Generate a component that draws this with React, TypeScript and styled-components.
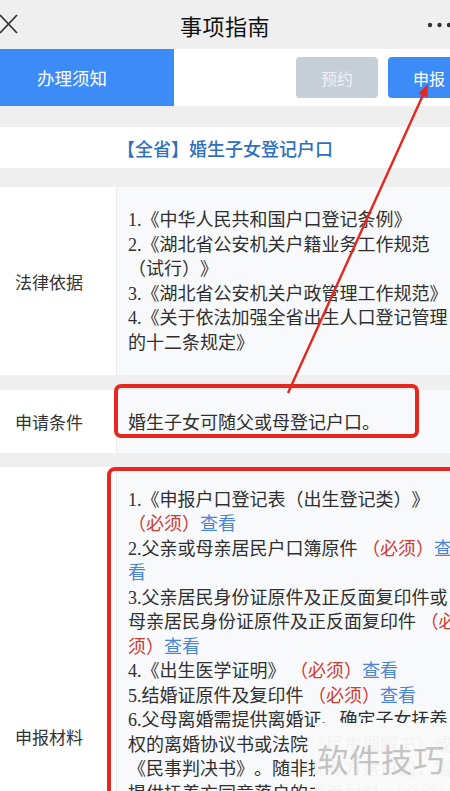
import styled, { createGlobalStyle } from "styled-components";

const GlobalStyle = createGlobalStyle`
  html, body {
    margin: 0;
    padding: 0;
    background: #efefef;
    overflow: hidden;
  }
  * {
    box-sizing: border-box;
  }
`;

const Frame = styled.div`
  position: relative;
  width: 450px;
  height: 791px;
  overflow: hidden;
  background: #efefef;
  font-family: "Noto Sans CJK SC", "Noto Sans", sans-serif;
  color: #333;
`;

const Header = styled.header`
  height: 49px;
  display: grid;
  grid-template-columns: 60px 1fr 60px;
  align-items: center;
  background: #efefef;
`;

const Title = styled.h1`
  margin: 0;
  text-align: center;
  font-size: 22px;
  font-weight: 400;
  color: #111;
  letter-spacing: 0.5px;
`;

const Close = styled.svg`
  margin-left: -1px;
  margin-top: -2px;
`;

const Dots = styled.svg`
  justify-self: end;
  margin-right: -4px;
`;

const TabBar = styled.nav`
  height: 57px;
  display: flex;
  align-items: center;
  background: #fff;
`;

const ActiveTab = styled.div`
  flex-shrink: 0;
  width: 174px;
  height: 100%;
  display: flex;
  align-items: center;
  padding-left: 37px;
  background: #3d8bf6;
  color: #fff;
  font-size: 17.5px;
`;

const Actions = styled.div`
  flex-shrink: 0;
  display: flex;
  gap: 10px;
  margin-left: 122px;
`;

const ActionButton = styled.button<{ $primary?: boolean }>`
  flex-shrink: 0;
  width: 82px;
  height: 41px;
  border: none;
  border-radius: 4px;
  background: ${(p) => (p.$primary ? "#3d8bf6" : "#c6ced8")};
  color: ${(p) => (p.$primary ? "#fff" : "#eef2f7")};
  font-family: inherit;
  font-size: 16px;
  padding: 0;
`;

const Body = styled.main`
  display: flex;
  flex-direction: column;
  padding-top: 21px;
`;

const ItemTitle = styled.div`
  height: 41px;
  display: flex;
  align-items: center;
  justify-content: center;
  background: #fff;
  color: #2f6fc0;
  font-size: 18px;
  font-weight: 500;
  margin-bottom: 19px;
`;

const Row = styled.section<{ $gap?: number }>`
  display: grid;
  grid-template-columns: 117px 347px;
  background: #fff;
  margin-bottom: ${(p) => p.$gap ?? 15}px;
`;

const Label = styled.div`
  display: flex;
  align-items: center;
  padding-left: 15px;
  font-size: 17px;
  color: #333;
  border-right: 1px solid #e8e9ec;
`;

const Content = styled.div<{ $pt?: number; $pb?: number }>`
  background: #f8f9fb;
  padding: ${(p) => p.$pt ?? 21}px 3px ${(p) => p.$pb ?? 20}px 11px;
  font-family: "Liberation Serif", "Noto Sans CJK SC", serif;
  font-size: 18px;
  line-height: 24.5px;
  color: #2f2f2f;
  text-spacing-trim: space-all;
`;

const Line = styled.div``;

const Required = styled.span`
  color: #d03a32;
`;

const Link = styled.span`
  color: #4a86d6;
`;

const Overlay = styled.svg`
  position: absolute;
  top: 0;
  left: 0;
  pointer-events: none;
`;

const Watermark = styled.div`
  position: absolute;
  left: 315px;
  top: 723px;
  width: 150px;
  height: 80px;
  padding: 12px 0 0 2px;
  background: rgba(250, 250, 250, 0.96);
  color: #c3c3c3;
  font-size: 31.5px;
  letter-spacing: 0.5px;
`;

const laws = [
  "1.《中华人民共和国户口登记条例》",
  "2.《湖北省公安机关户籍业务工作规范（试行）》",
  "3.《湖北省公安机关户政管理工作规范》",
  "4.《关于依法加强全省出生人口登记管理的十二条规定》",
];

const materials = [
  "1.《申报户口登记表（出生登记类）》",
  "2.父亲或母亲居民户口簿原件",
  "3.父亲居民身份证原件及正反面复印件或母亲居民身份证原件及正反面复印件",
  "4.《出生医学证明》",
  "5.结婚证原件及复印件",
  "6.父母离婚需提供离婚证、确定子女抚养权的离婚协议书或法院《民事调解书》或《民事判决书》。随非抚养方落户的，需提供抚养方同意落户的书面材料",
  "7.父母一方为现役军人的，需提供部队团级以上政治机关出具的身份证明",
  "8.委托他人代办的，需提供委托书及受托人居民身份证原件",
  "9.申请人居民身份证原件",
];

export default function App() {
  return (
    <>
      <GlobalStyle />
      <Frame>
        <Header>
          <Close width="20" height="20" viewBox="0 0 20 20">
            <path d="M1 1 L18 19 M18 1 L1 19" stroke="#333" strokeWidth="1.8" fill="none" />
          </Close>
          <Title>事项指南</Title>
          <Dots width="30" height="8" viewBox="0 0 30 8">
            <circle cx="6" cy="4" r="2.2" fill="#333" />
            <circle cx="15.5" cy="4" r="2.2" fill="#333" />
            <circle cx="25" cy="4" r="2.2" fill="#333" />
          </Dots>
        </Header>

        <TabBar>
          <ActiveTab>办理须知</ActiveTab>
          <Actions>
            <ActionButton>预约</ActionButton>
            <ActionButton $primary>申报</ActionButton>
          </Actions>
        </TabBar>

        <Body>
          <ItemTitle>【全省】婚生子女登记户口</ItemTitle>

          <Row>
            <Label>法律依据</Label>
            <Content>
              {laws.map((t) => (
                <Line key={t}>{t}</Line>
              ))}
            </Content>
          </Row>

          <Row $gap={14}>
            <Label>申请条件</Label>
            <Content $pt={21} $pb={17}>
              婚生子女可随父或母登记户口。
            </Content>
          </Row>

          <Row>
            <Label>申报材料</Label>
            <Content $pb={28}>
              {materials.map((t) => (
                <Line key={t}>
                  {t} <Required>（必须）</Required>
                  <Link>查看</Link>
                </Line>
              ))}
            </Content>
          </Row>
        </Body>

        <Overlay width="450" height="791" viewBox="0 0 450 791">
          <line x1="288" y1="393" x2="423" y2="95" stroke="#e5271f" strokeWidth="2.4" />
          <polygon points="428,84 427.5,97.5 418.5,93.5" fill="#e5271f" />
          <rect x="116" y="386" width="301" height="50" rx="5" fill="none" stroke="#e5271f" strokeWidth="4" />
          <rect x="109" y="469" width="400" height="400" rx="6" fill="none" stroke="#e5271f" strokeWidth="4" />
        </Overlay>

        <Watermark>软件技巧</Watermark>
      </Frame>
    </>
  );
}
